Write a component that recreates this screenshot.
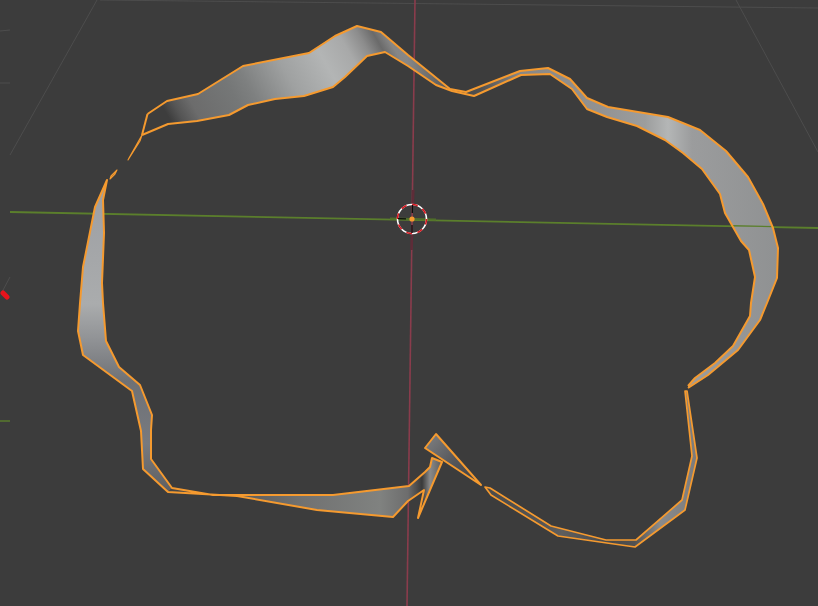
const top1 = "147.5,114 167,101 198,94 243,66 309,53 335,36 357,26 381,32 408,55 450,89 466,92 520,71 548,68 570,79 587,98 608,107 668,117 700,130 726,151 748,177 763,204 773,228 778,248 777,278 767,303 760,320 738,350 708,375 688,388";
const low1 = "688,386 695,378 715,363 733,346 750,316 751,303 755,277 749,250 741,241 725,213 720,194 702,169 683,153 665,140 637,126 607,117 587,109 572,89 550,74 521,75 474,96 452,91 436,85 408,66 385,52 367,56 345,77 333,87 304,96 275,99 248,105 229,115 197,121 168,124 142,135";
const fillA = "147.5,114 167,101 198,94 243,66 309,53 335,36 357,26 381,32 408,55 408,66 385,52 367,56 345,77 333,87 304,96 275,99 248,105 229,115 197,121 168,124 142,135";
const fillB = "408,55 450,89 466,92 520,71 548,68 570,79 587,98 608,107 668,117 700,130 726,151 748,177 763,204 773,228 778,248 777,278 767,303 760,320 738,350 708,375 688,388 688,386 695,378 715,363 733,346 750,316 751,303 755,277 749,250 741,241 725,213 720,194 702,169 683,153 665,140 637,126 607,117 587,109 572,89 550,74 521,75 474,96 452,91 436,85 408,66";
const outerL = "107,180 95,207 83,267 80,303 78,331 83,355 132,391 141,431 143,469 168,492 237,496 317,510 393,517 408,501 424,490 418,518 442,462 432,458 430,467 425,472 409,486 333,495 283,495 213,495 172,488 151,459 151,430 152,415 140,385 119,367 106,341 103,303 102,283 104,233 103,200";
const lowStrip = "685,391 692,456 682,500 636,540 606,540 551,526 490,488 485,487 491,495 558,536 635,547 685,510 697,458 687,391";

const sA: [number, string][] = [[147, "#3d3d3d"], [160, "#555555"], [178, "#6c6c6c"], [225, "#757777"], [245, "#7e8080"], [290, "#9fa1a1"], [335, "#b3b5b5"], [365, "#a8a9a9"], [385, "#8c8c8c"], [400, "#6a6a6a"], [412, "#868686"], [450, "#8a8a8a"]];
const sB: [number, string][] = [[408, "#868686"], [436, "#666666"], [462, "#4a4a4a"], [480, "#505050"], [521, "#878787"], [600, "#929292"], [645, "#9c9d9d"], [668, "#b4b6b6"], [692, "#9b9c9d"], [780, "#8f9192"]];
const s2: [number, string][] = [[170, "#454545"], [240, "#5c5c5c"], [300, "#707171"], [380, "#808280"], [408, "#6d6d6d"], [422, "#3a3a3a"], [430, "#8a8a8a"], [442, "#5c5c5c"]];
const s6: [number, string][] = [[485, "#4a4a4a"], [540, "#545454"], [562, "#5e5e5e"], [610, "#484848"], [635, "#525252"], [660, "#8a8b8c"], [697, "#7a7b7d"]];

const orange = "#f59a2f";

export default function App() {
  return (
    <div className="w-[818px] h-[606px] bg-[#3c3c3c] overflow-hidden">
      <svg width="818" height="606" viewBox="0 0 818 606" className="block" fill="none">
        <defs>
          <linearGradient id="gA" gradientUnits="userSpaceOnUse" x1="142" y1="0" x2="450" y2="0" gradientTransform="translate(-46 0) skewX(30)">
            {sA.map(([x, c]) => <stop key={x} offset={(x - 142) / 308} stopColor={c} />)}
          </linearGradient>
          <linearGradient id="gB" gradientUnits="userSpaceOnUse" x1="408" y1="0" x2="780" y2="0">
            {sB.map(([x, c]) => <stop key={x} offset={(x - 408) / 372} stopColor={c} />)}
          </linearGradient>
          <linearGradient id="g2" gradientUnits="userSpaceOnUse" x1="170" y1="0" x2="442" y2="0">
            {s2.map(([x, c]) => <stop key={x} offset={(x - 170) / 272} stopColor={c} />)}
          </linearGradient>
          <linearGradient id="g6" gradientUnits="userSpaceOnUse" x1="485" y1="0" x2="697" y2="0">
            {s6.map(([x, c]) => <stop key={x} offset={(x - 485) / 212} stopColor={c} />)}
          </linearGradient>
          <linearGradient id="g3" gradientUnits="userSpaceOnUse" x1="0" y1="180" x2="0" y2="490">
            <stop offset="0" stopColor="#9c9ea2" />
            <stop offset="0.4" stopColor="#aaacad" />
            <stop offset="0.52" stopColor="#8f9194" />
            <stop offset="0.65" stopColor="#6f7175" />
            <stop offset="0.85" stopColor="#777a80" />
            <stop offset="1" stopColor="#5f6062" />
          </linearGradient>
          <linearGradient id="g4" gradientUnits="userSpaceOnUse" x1="428" y1="440" x2="478" y2="485">
            <stop offset="0" stopColor="#7a7b7d" />
            <stop offset="0.5" stopColor="#55565a" />
            <stop offset="1" stopColor="#3f3f3f" />
          </linearGradient>
        </defs>

        {/* grid lines */}
        <g stroke="#4d4d4d" strokeWidth="1">
          <line x1="100" y1="0" x2="818" y2="8" />
          <line x1="97" y1="0" x2="10" y2="155" />
          <line x1="736" y1="0" x2="818" y2="152" />
          <line x1="0" y1="31" x2="10" y2="30" />
          <line x1="0" y1="83" x2="10" y2="83" />
          <line x1="10" y1="277" x2="2" y2="292" />
        </g>

        {/* axes */}
        <line x1="10" y1="212" x2="818" y2="228" stroke="#5b7f2c" strokeWidth="1.8" />
        <line x1="0" y1="421" x2="10" y2="421" stroke="#5b7f2c" strokeWidth="1.4" />
        <line x1="415" y1="0" x2="407" y2="606" stroke="#8a3c4c" strokeWidth="1.6" />
        <line x1="3" y1="293" x2="7" y2="297" stroke="#e8141c" strokeWidth="5" strokeLinecap="round" />

        {/* ribbon fills */}
        <polygon points={fillA} fill="url(#gA)" />
        <polygon points={fillB} fill="url(#gB)" />
        <polygon points="107,180 95,207 83,267 80,303 78,331 83,355 132,391 141,431 143,469 168,492 172,488 151,459 151,430 152,415 140,385 119,367 106,341 103,303 102,283 104,233 103,200" fill="url(#g3)" />
        <polygon points="168,492 237,496 317,510 393,517 408,501 424,490 418,518 442,462 432,458 430,467 425,472 409,486 333,495 283,495 213,495 172,488" fill="url(#g2)" />
        <polygon points={lowStrip} fill="url(#g6)" />
        <polygon points="436,434 481,485 425,448" fill="url(#g4)" />

        {/* axis seen over the right side of the ribbon */}
        <line x1="732" y1="225.8" x2="773" y2="226.6" stroke="#5b7f2c" strokeWidth="1.4" />

        {/* outlines */}
        <g stroke={orange} strokeWidth="2" strokeLinejoin="round">
          <polyline points={top1} />
          <polyline points={low1} />
          <polyline points="147.5,114 142,135" />
          <polygon points={outerL} />
          <polygon points={lowStrip} strokeWidth="1.7" />
          <polygon points="436,434 481,485 425,448" />
          <polygon points="142,135 129,158 128,160 140,141" strokeWidth="1.1" />
          <polygon points="111,176 117,170 115,174 110,179" strokeWidth="1.1" />
        </g>

        {/* 3D cursor */}
        <g>
          <line x1="413.3" y1="190" x2="412.7" y2="206" stroke="#5e2c38" strokeWidth="2.6" />
          <line x1="412" y1="232" x2="411.5" y2="250" stroke="#5e2c38" strokeWidth="2.6" />
          <line x1="390" y1="218.6" x2="436" y2="219.5" stroke="#4f6e2a" strokeWidth="2" />
          <circle cx="412" cy="219" r="14.5" stroke="#ffffff" strokeWidth="1.6" />
          <circle cx="412" cy="219" r="14.5" stroke="#d8161e" strokeWidth="1.6" strokeDasharray="5.7 5.7" pathLength="91" />
          <g stroke="#0c0c0c" strokeWidth="1.3">
            <line x1="412.5" y1="205" x2="412.3" y2="213" />
            <line x1="412" y1="225" x2="412" y2="233" />
            <line x1="398" y1="218.6" x2="406" y2="218.8" />
          </g>
          <circle cx="412" cy="219" r="2.6" fill={orange} />
        </g>
      </svg>
    </div>
  );
}
